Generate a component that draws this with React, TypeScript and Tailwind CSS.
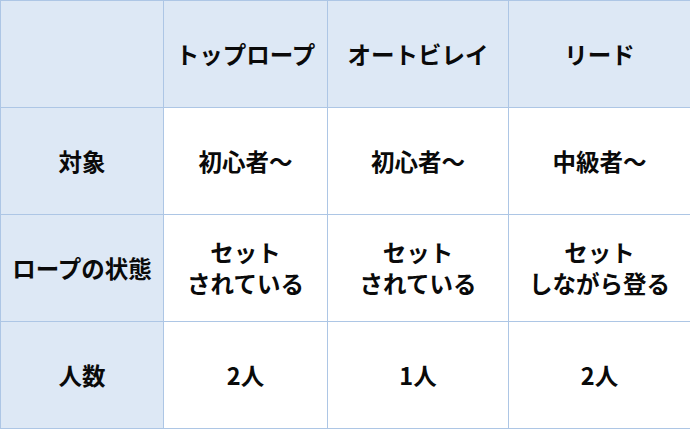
const headers = ["トップロープ", "オートビレイ", "リード"];

const rows: { label: string; cells: string[][] }[] = [
  { label: "対象", cells: [["初心者〜"], ["初心者〜"], ["中級者〜"]] },
  {
    label: "ロープの状態",
    cells: [
      ["セット", "されている"],
      ["セット", "されている"],
      ["セット", "しながら登る"],
    ],
  },
  { label: "人数", cells: [["2人"], ["1人"], ["2人"]] },
];

const colWidths = ["w-[163px]", "w-[164px]", "w-[181px]", "w-[182px]"];

export default function App() {
  return (
    <div
      className="h-[430px] w-[690px] bg-white text-[#0a0a0a]"
      style={{ fontFamily: '"Noto Sans CJK JP", "Noto Sans", sans-serif' }}
    >
      <table className="h-[429px] w-[690px] table-fixed border-collapse text-[23.5px] font-bold leading-[31px]">
        <colgroup>
          {colWidths.map((w) => (
            <col className={w} key={w} />
          ))}
        </colgroup>
        <thead>
          <tr className="h-[107px] bg-[#dde8f5]">
            <th className="border border-[#adc6e5]" />
            {headers.map((h) => (
              <th className="border border-[#adc6e5] text-center" key={h}>
                {h}
              </th>
            ))}
          </tr>
        </thead>
        <tbody>
          {rows.map((row) => (
            <tr className="h-[107px]" key={row.label}>
              <th className="border border-[#adc6e5] bg-[#dde8f5] text-center">{row.label}</th>
              {row.cells.map((lines, i) => (
                <td className="border border-[#adc6e5] text-center" key={i}>
                  {lines.map((l) => (
                    <div key={l}>{l}</div>
                  ))}
                </td>
              ))}
            </tr>
          ))}
        </tbody>
      </table>
    </div>
  );
}
